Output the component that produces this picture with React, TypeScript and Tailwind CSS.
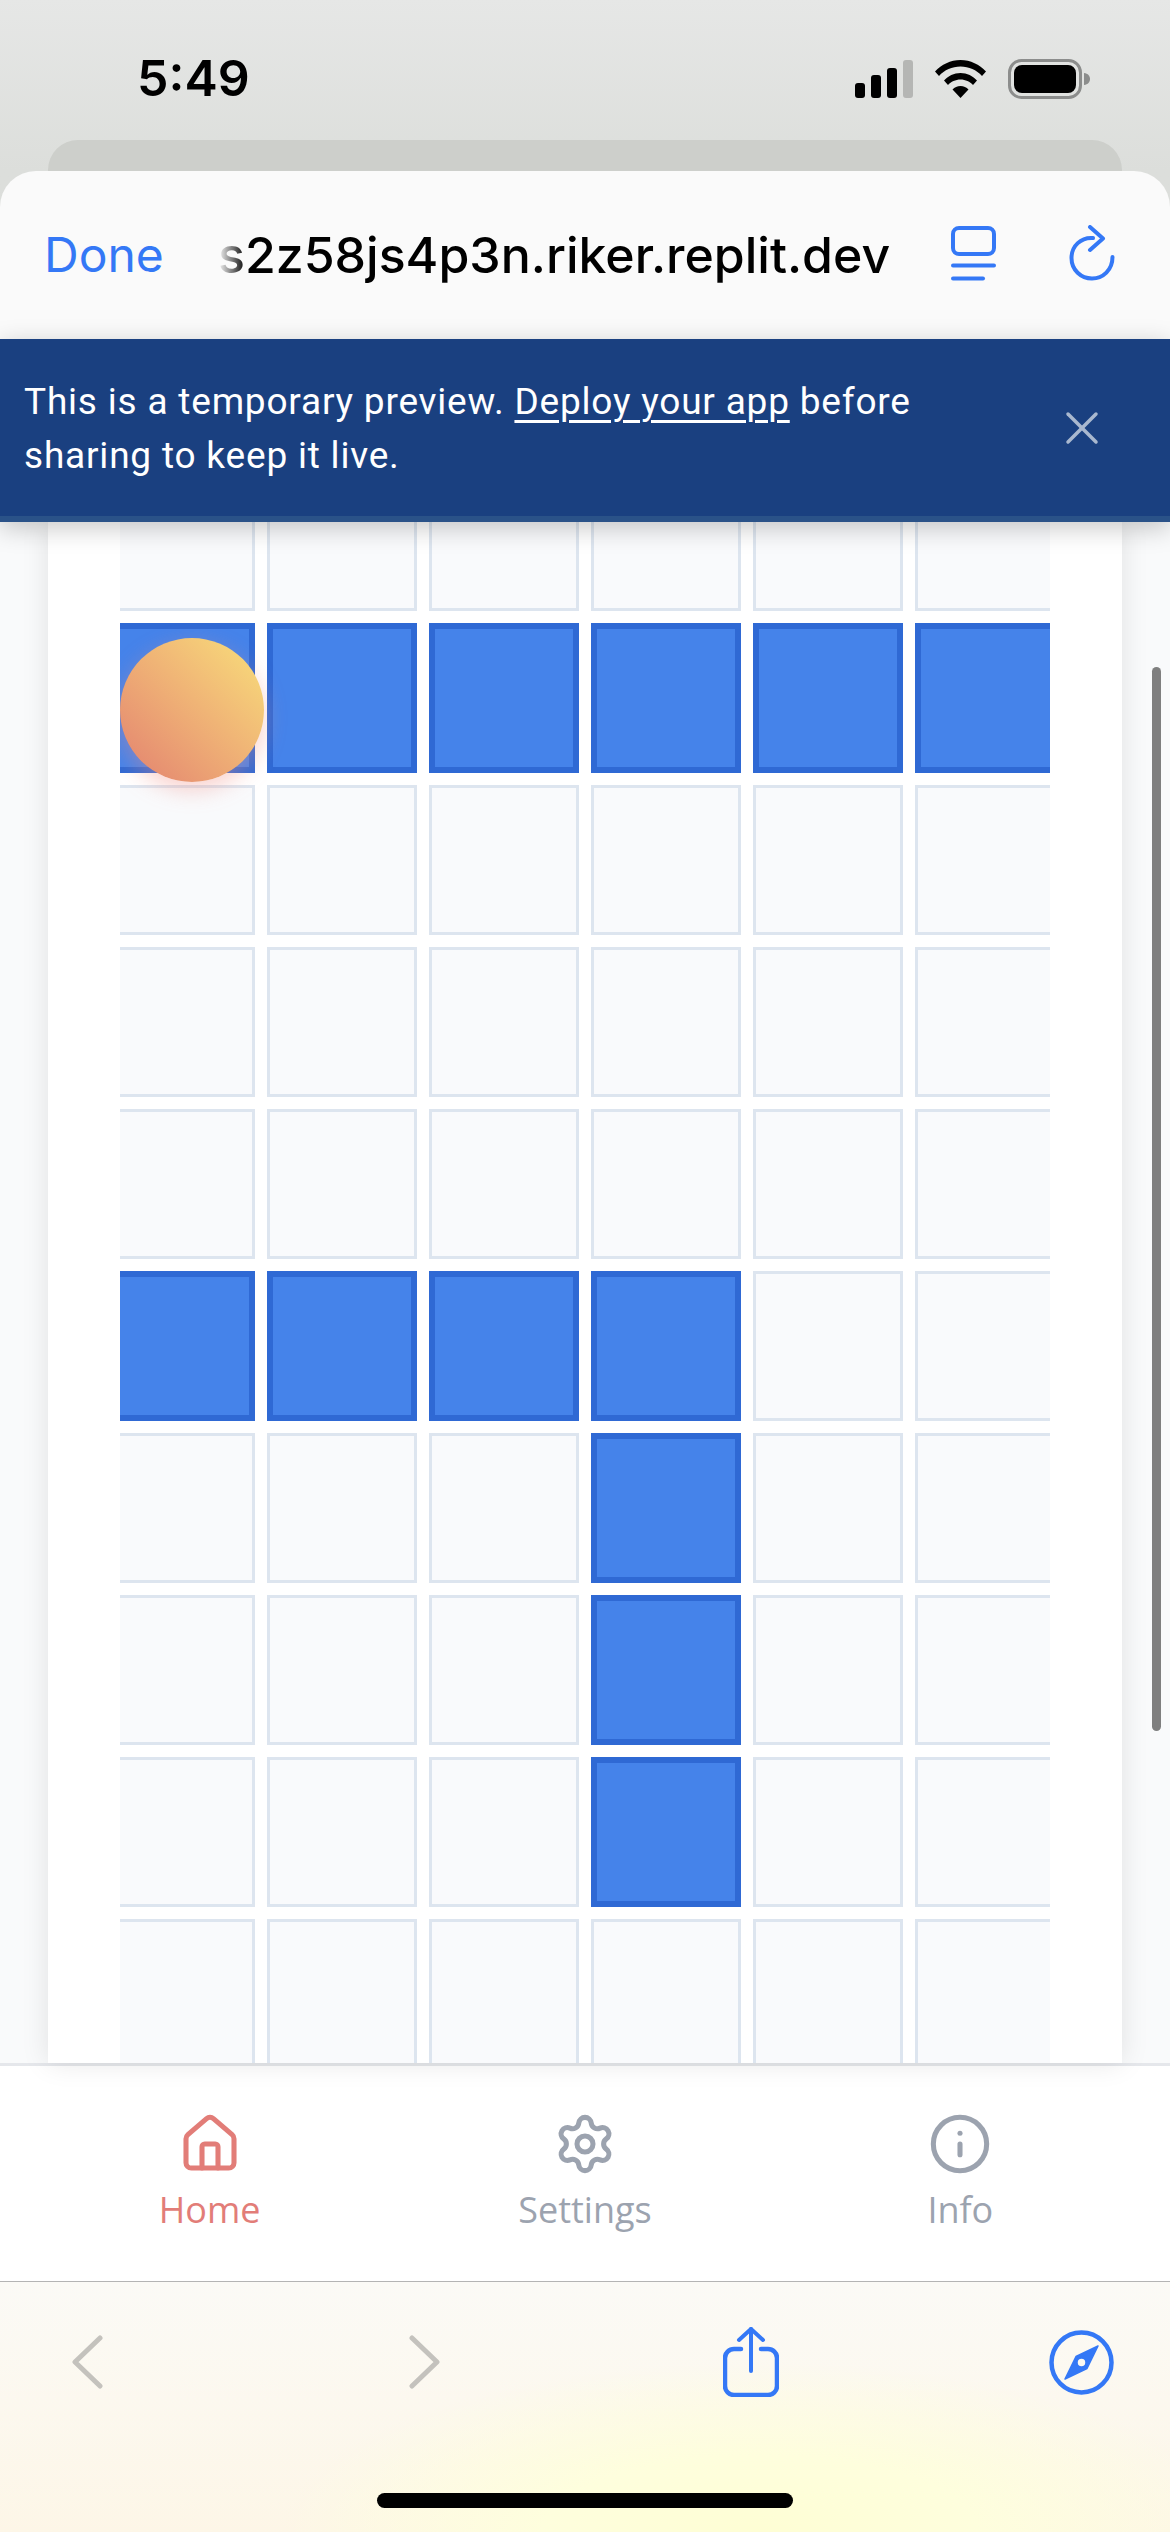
import React from 'react';
import { House, Settings, Info, X } from 'lucide-react';

const ROWS = 10;
const COLS = 6;

// cells that are switched on, as "row-col"
const activeCells = new Set<string>([
    '1-0', '1-1', '1-2', '1-3', '1-4', '1-5',
    '5-0', '5-1', '5-2', '5-3',
    '6-3', '7-3', '8-3',
]);

const StatusBar = () => (
    <div className="flex h-[140px] shrink-0 items-start justify-between pt-[50px] pl-[137px] pr-[79px]">
        <span className="text-[50px] leading-[56px] font-semibold text-black">5:49</span>
        <div className="flex items-center gap-[22px] pt-[9px]">
            <svg width="58" height="38" viewBox="0 0 58 38">
                <rect x="0" y="23" width="10" height="15" rx="3" fill="#000" />
                <rect x="16" y="15" width="10" height="23" rx="3" fill="#000" />
                <rect x="32" y="8" width="10" height="30" rx="3" fill="#000" />
                <rect x="48" y="0" width="10" height="38" rx="3" fill="#b5b6b4" />
            </svg>
            <svg width="51" height="38" viewBox="0 0 51 38">
                <path d="M0 11.5C6.5 4.6 15.5 0 25.5 0S44.500 4.600 51 11.500L47 16C41.500 10 34 6.500 25.500 6.500S9.500 10 4 16z" fill="#000" />
                <path d="M9 20.500C13 16 19 13 25.500 13S38 16 42 20.500L38 25C35 21.800 30.500 19.500 25.500 19.500S16 21.800 13 25z" fill="#000" />
                <path d="M17.500 29.500C19.500 27.300 22.300 26 25.500 26S31.500 27.300 33.500 29.500L25.500 38z" fill="#000" />
            </svg>
            <svg width="83" height="40" viewBox="0 0 83 40">
                <rect x="1.500" y="1.500" width="71" height="37" rx="12" fill="none" stroke="#8c8d8c" strokeWidth="3" />
                <rect x="6" y="6" width="62" height="28" rx="8" fill="#000" />
                <path d="M76 14c4 .6 6 3 6 6s-2 5.400-6 6z" fill="#8c8d8c" />
            </svg>
        </div>
    </div>
);

const SafariHeader = () => (
    <div className="flex h-[168px] shrink-0 items-center rounded-t-[36px] bg-[#fafafa] pl-[44px] pb-[1px]">
        <span className="w-[174px] text-[48px] leading-[56px] text-[#3478f6]">Done</span>
        <span className="w-[676px] overflow-hidden text-[50px] leading-[60px] font-medium whitespace-nowrap text-black [mask-image:linear-gradient(to_right,transparent_0,black_28px)]">
            s2z58js4p3n.riker.replit.dev
        </span>
        <svg className="ml-[57px] -mt-[3px]" width="45" height="55" viewBox="0 0 45 55" fill="none" stroke="#3478f6" strokeWidth="4" strokeLinecap="round">
            <rect x="2" y="2" width="41" height="26" rx="6" />
            <path d="M2 39.500h41" />
            <path d="M2 52.500h30" />
        </svg>
        <svg className="ml-[73px] -mt-[3px]" width="46" height="56" viewBox="0 0 46 56" fill="none" stroke="#3478f6" strokeWidth="4" strokeLinecap="round" strokeLinejoin="round">
            <path d="M24 13C12 12 2.500 21 2.500 33C2.500 45 12 53.500 23 53.500C34 53.500 43.500 45 43.500 32" />
            <path d="M21 2l13 11.500-13 11.500" />
        </svg>
    </div>
);

const PreviewBanner = () => (
    <div className="relative z-20 flex h-[183px] shrink-0 items-center justify-between border-b-[6px] border-b-[#2a5288] bg-[#1a4080] pl-[24px] pr-[60px] font-['Roboto',sans-serif] shadow-[0_6px_24px_rgba(0,0,0,0.22)]">
        <p className="w-[960px] pt-[3px] text-[37px] leading-[54px] tracking-[0.8px] text-white">
            This is a temporary preview. <span className="underline decoration-[3px] underline-offset-[6px]">Deploy your app</span> before sharing to keep it live.
        </p>
        <X size={56} strokeWidth={1.5} className="text-[#a9b8cf]" />
    </div>
);

const Board = () => (
    <div className="h-full overflow-hidden">
        <div className="-mt-[61px] -ml-[15px] grid w-[960px] grid-cols-6 gap-[12px]">
            {Array.from({ length: ROWS * COLS }).map((_, i) => {
                const row = Math.floor(i / COLS);
                const col = i % COLS;
                const active = activeCells.has(`${row}-${col}`);
                return (
                    <div
                        key={i}
                        className={
                            active
                                ? 'relative h-[150px] border-[6px] border-[#2f69d4] bg-[#4583ea]'
                                : 'h-[150px] border-[3px] border-[#dde5ef] bg-[#f9fafc]'
                        }
                    >
                        {row === 1 && col === 0 && (
                            <div className="absolute top-[9px] left-[9px] z-10 h-[144px] w-[144px] rounded-full bg-gradient-to-tr from-[#e2806f] to-[#f8e07a] shadow-[0_8px_22px_rgba(240,140,130,0.4)]" />
                        )}
                    </div>
                );
            })}
        </div>
    </div>
);

const NavItem = ({ icon, label, active }: { icon: React.ReactNode; label: string; active?: boolean }) => (
    <div className={`flex flex-col items-center ${active ? 'text-[#e27d78]' : 'text-[#9ca3af]'}`}>
        {icon}
        <span className="mt-[9px] text-[36px] leading-[50px]">{label}</span>
    </div>
);

const BottomNav = () => (
    <div className="grid h-[219px] shrink-0 grid-cols-3 border-t-[3px] border-b border-t-[#e5e7eb] border-b-[#b4b4b4] bg-white px-[22px] pt-[46px] font-['Open_Sans',sans-serif]">
        <NavItem active label="Home" icon={<House size={64} strokeWidth={1.9} />} />
        <NavItem label="Settings" icon={<Settings size={64} strokeWidth={1.9} />} />
        <NavItem label="Info" icon={<Info size={64} strokeWidth={1.9} />} />
    </div>
);

const SafariToolbar = () => (
    <div className="flex flex-1 flex-col items-center bg-[radial-gradient(ellipse_480px_170px_at_65%_100%,#fefed4_0%,#fefedd_45%,rgba(254,254,228,0)_100%),linear-gradient(to_bottom,#fbfaf6_0%,#fdf6e7_100%)] pt-[45px]">
        <div className="flex h-[70px] w-full items-center pl-[72px]">
            <svg width="31" height="54" viewBox="0 0 31 54" fill="none" stroke="#c4c2bd" strokeWidth="5" strokeLinecap="round" strokeLinejoin="round">
                <path d="M28 3L3 27l25 24" />
            </svg>
            <svg className="ml-[306px]" width="31" height="54" viewBox="0 0 31 54" fill="none" stroke="#c4c2bd" strokeWidth="5" strokeLinecap="round" strokeLinejoin="round">
                <path d="M3 3l25 24L3 51" />
            </svg>
            <svg className="ml-[283px]" width="56" height="70" viewBox="0 0 56 70" fill="none" stroke="#3478f6" strokeWidth="4.500" strokeLinecap="round" strokeLinejoin="round">
                <path d="M18 22H11a9 9 0 0 0-9 9v28a9 9 0 0 0 9 9h34a9 9 0 0 0 9-9V31a9 9 0 0 0-9-9h-7" />
                <path d="M28 44V2" strokeWidth="4" />
                <path d="M16 13L28 2l12 11" strokeWidth="4" />
            </svg>
            <svg className="ml-[270px]" width="65" height="65" viewBox="0 0 65 65" fill="none">
                <circle cx="32.500" cy="32.500" r="30" stroke="#3478f6" strokeWidth="4.500" />
                <path fillRule="evenodd" clipRule="evenodd" d="M49 16L27 26.500 16 49l22-10.500zM32.500 28a4.500 4.500 0 1 1 0 9 4.500 4.500 0 0 1 0-9z" fill="#3478f6" stroke="#3478f6" strokeWidth="1.500" strokeLinejoin="round" />
            </svg>
        </div>
        <div className="mt-auto mb-[24px] h-[15px] w-[416px] rounded-full bg-black" />
    </div>
);

export default function App() {
    return (
        <div className="flex h-[2532px] w-[1170px] flex-col overflow-hidden bg-gradient-to-b from-[#e6e7e6] to-[#dcdedb] to-[171px] font-['Inter',sans-serif]">
            <StatusBar />
            <div className="mx-[48px] h-[31px] shrink-0 rounded-t-[30px] bg-[#cdcfcb]" />
            <SafariHeader />
            <PreviewBanner />

            {/* page under the banner */}
            <div className="relative min-h-0 flex-1 bg-[#f9fafb] px-[48px]">
                <div className="h-full bg-white px-[72px] shadow-[0_0_26px_rgba(0,0,0,0.1)]">
                    <Board />
                </div>
                <div className="absolute top-[145px] right-[9px] h-[1064px] w-[9px] rounded-full bg-[#7f7f7f]" />
            </div>

            <BottomNav />
            <div className="flex h-[250px] shrink-0">
                <SafariToolbar />
            </div>
        </div>
    );
}
